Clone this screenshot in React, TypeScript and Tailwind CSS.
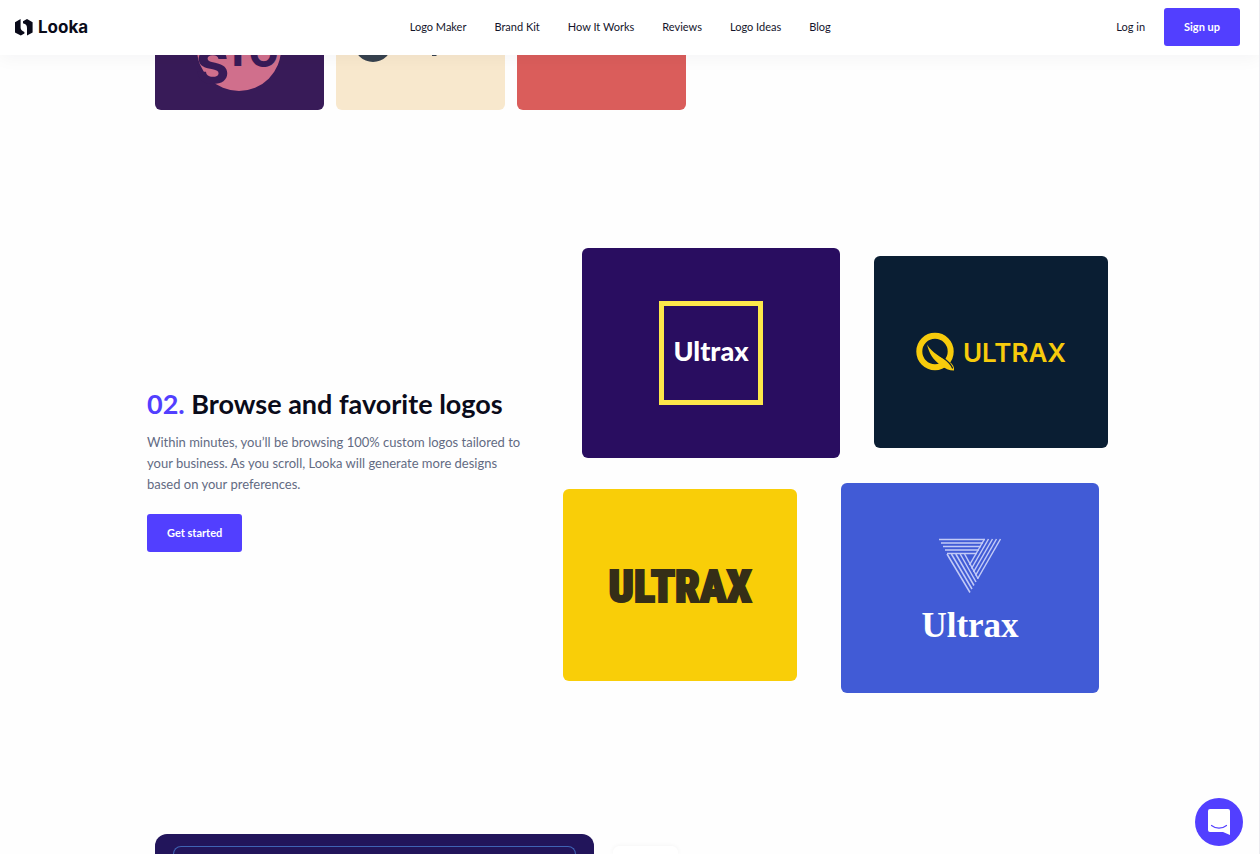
import type { ReactNode } from "react";

const navLinks = ["Logo Maker", "Brand Kit", "How It Works", "Reviews", "Logo Ideas", "Blog"];

function LookaMark() {
  return (
    <svg viewBox="0 0 18 17" className="h-[17px] w-[18px]" fill="#0a0b1a" aria-hidden="true">
      <path d="M0 3.3 5.6 0v8.6c0 2 1 3.2 3.8 4.3v1.6L5.8 16.6 0 13.5z" />
      <path d="M8 2.2 12 0l5.6 3.3v10.2L12 16.6V9c0-2.600-.8-3.700-4-4.800z" />
    </svg>
  );
}

function Header() {
  return (
    <header className="relative z-10 flex h-[55px] shrink-0 items-center bg-white pr-[19px] pb-px pl-[15px] text-[11px] text-[#14152b] shadow-[0_4px_16px_rgba(20,20,60,0.04)]">
      <a href="#home" className="flex items-center gap-[5px] font-[Inter] text-[17px] leading-7 font-bold text-[#0a0b1a]">
        <LookaMark />
        Looka
      </a>
      <nav className="mx-auto flex gap-7 pl-9">
        {navLinks.map((link) => (
          <a key={link} href="#nav" className="hover:text-[#523fff]">
            {link}
          </a>
        ))}
      </nav>
      <div className="flex items-center gap-[19px]">
        <a href="#login">Log in</a>
        <PrimaryButton>Sign up</PrimaryButton>
      </div>
    </header>
  );
}

function PrimaryButton({ children }: { children: ReactNode }) {
  return (
    <button className="h-[38px] rounded-[3px] bg-[#523fff] px-5 text-[11px] font-bold text-white hover:bg-[#4432e0]">
      {children}
    </button>
  );
}

// Tail end of step 01, scrolled under the header
function PreviousStep() {
  return (
    <section className="mx-auto w-full max-w-[965px] pl-2">
      <div className="flex gap-3">
        <div className="h-[55px] w-[169px] overflow-hidden rounded-b-md bg-[#381b58]">
          <svg viewBox="0 0 169 55" className="h-[55px] w-[169px]" aria-hidden="true">
            <circle cx="84" cy="-6" r="42" fill="#d06f8c" />
            <g fill="#381b58" fontFamily="Inter" fontWeight="800">
              <text x="41" y="29" fontSize="50">S</text>
              <text x="77" y="11" fontSize="40">I</text>
              <text x="94" y="12" fontSize="38">O</text>
            </g>
          </svg>
        </div>
        <div className="h-[55px] w-[169px] overflow-hidden rounded-b-md bg-[#f8e8cd]">
          <svg viewBox="0 0 169 55" className="h-[55px] w-[169px]" fill="#37424e" aria-hidden="true">
            <circle cx="37" cy="-12" r="19" />
            <path d="M96 0h5l-1 1h-4z" />
          </svg>
        </div>
        <div className="h-[55px] w-[169px] rounded-b-md bg-[#da5d5b]" />
      </div>
    </section>
  );
}

function LeafMark() {
  return (
    <svg viewBox="0 0 40 40" className="size-10" aria-hidden="true">
      <circle cx="19" cy="19.500" r="15.700" fill="none" stroke="#f7cb0c" strokeWidth="6" />
      <path d="M11 12.500C16 21 25 25 33 29.500 37 32 38.500 35 38 38.500 33 38.500 29 36.500 25 33.500 17 28 13 21 11 12.500z" fill="#f7cb0c" />
      <path d="M22 22c5 4.500 11.500 6.500 14.500 14" fill="none" stroke="#0a1e33" strokeWidth="1.300" strokeLinecap="round" />
    </svg>
  );
}

function TriangleMark() {
  const rows = [0, 1, 2, 3, 4];
  return (
    <svg viewBox="0 0 64 56" className="h-14 w-16" fill="none" stroke="#c3cbf7" strokeWidth="1.500" aria-hidden="true">
      {rows.map((i) => (
        <g key={i}>
          <path d={`M${1 + i * 2} ${1.5 + i * 3.5}H${47 - i * 2}`} />
          <path d={`M${46.5 + i * 4} 1L${31.5 + i * 2} ${27 + i * 3.5}`} />
          <path d={`M${9 + i * 4.4} 16L${32 + i * 2} ${54.5 - i * 3.5}`} />
        </g>
      ))}
    </svg>
  );
}

function LogoGallery() {
  return (
    <div className="flex w-[545px] shrink-0 flex-col gap-[25px]">
      <div className="flex items-start justify-end gap-[34px]">
        <div className="flex h-[210px] w-[258px] items-center justify-center rounded-md bg-[#290d60]">
          <div className="flex size-[104px] items-center justify-center border-5 border-[#fde74a] pb-1 font-[Lato] text-[27px] font-black text-white">
            Ultrax
          </div>
        </div>
        <div className="mt-2 flex h-48 w-[234px] items-center justify-center gap-[7px] rounded-md bg-[#0a1e33] font-[Inter] text-[26px] font-semibold text-[#f7cb0c]">
          <LeafMark />
          ULTRAX
        </div>
      </div>
      <div className="flex items-start gap-11">
        <div className="mt-1.5 flex h-48 w-[234px] items-center justify-center rounded-md bg-[#f9ce08] pt-1 font-['Roboto_Condensed',Roboto] text-[44px] font-black text-[#352e17] [-webkit-text-stroke:2px_#352e17]">
          ULTRAX
        </div>
        <div className="flex h-[210px] w-[258px] flex-col items-center rounded-md bg-[#415bd6] pt-[55px]">
          <TriangleMark />
          <span className="mt-2 font-['Liberation_Serif'] text-[35px] leading-12 font-bold text-white">Ultrax</span>
        </div>
      </div>
    </div>
  );
}

function BrowseStep() {
  return (
    <section className="mx-auto mt-[138px] flex w-full max-w-[965px] items-center justify-between pr-1">
      <div className="w-[385px]">
        <h2 className="text-[27px] leading-[30px] font-bold text-[#0a0b1a]">
          <span className="text-[#523fff]">02.</span> Browse and favorite logos
        </h2>
        <p className="mt-[13px] text-[13px] leading-[21px] text-[#636b83]">
          Within minutes, you’ll be browsing 100% custom logos tailored to your business. As you scroll, Looka will
          generate more designs based on your preferences.
        </p>
        <div className="mt-[19px] flex">
          <PrimaryButton>Get started</PrimaryButton>
        </div>
      </div>
      <LogoGallery />
    </section>
  );
}

function NextStep() {
  return (
    <section className="mx-auto mt-[141px] flex w-full max-w-[965px] flex-1 gap-[19px] pl-2">
      <div className="w-[439px] rounded-t-xl bg-[#22155b] px-[18px] pt-3">
        <div className="h-full rounded-t-lg border border-b-0 border-[#3f63b4]" />
      </div>
      <div className="mt-3 w-[65px] rounded-t-md bg-white shadow-[0_0_5px_rgba(0,0,0,0.05)]" />
    </section>
  );
}

export default function App() {
  return (
    <div className="flex h-screen flex-col overflow-hidden border-r border-[#ececf0] bg-[#fefefe] font-[Lato,sans-serif]">
      <Header />
      <PreviousStep />
      <BrowseStep />
      <NextStep />
      <button
        aria-label="Open chat"
        className="fixed right-[17px] bottom-2 flex size-12 items-center justify-center rounded-full bg-[#523fff]"
      >
        <svg viewBox="0 0 24 26" className="h-[26px] w-6" aria-hidden="true">
          <path d="M3 0h18q2 0 2 2v24l-7-3H3q-2 0-2-2V2q0-2 2-2z" fill="#fff" />
          <path d="M4.500 16.500c4.500 3.500 10.500 3.500 15 0" fill="none" stroke="#523fff" strokeWidth="1.200" strokeLinecap="round" />
        </svg>
      </button>
    </div>
  );
}
